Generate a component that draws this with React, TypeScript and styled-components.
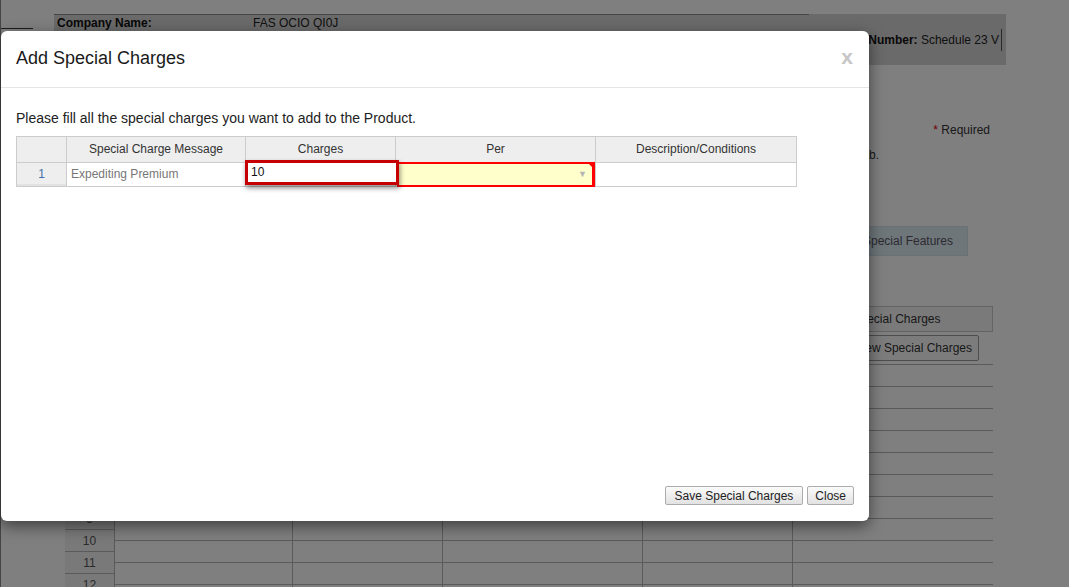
import React from "react";
import styled, { createGlobalStyle } from "styled-components";

const GlobalStyle = createGlobalStyle`
  * { box-sizing: border-box; }
  html, body { margin: 0; padding: 0; background: #fff; }
  body {
    font-family: "Liberation Sans", Arial, sans-serif;
    font-size: 12px;
    color: #333;
  }
`;

const Viewport = styled.div`
  position: relative;
  width: 1069px;
  height: 587px;
  overflow: hidden;
`;

/* ---------- background page ---------- */

const Page = styled.div`
  display: flex;
  height: 100%;
`;

const SideNav = styled.ul`
  flex: none;
  width: 33px;
  margin: 0;
  padding: 6px 0 0;
  list-style: none;
  border-left: 1px solid #8a8a8a;
`;

const NavItem = styled.li`
  height: 23px;
  border-bottom: 1px solid #3a3a3a;
`;

const Main = styled.div`
  flex: none;
  width: 952px;
  margin-left: 21px;
  padding-top: 14px;
  display: flex;
  flex-direction: column;
`;

const InfoBox = styled.div`
  flex: none;
  display: flex;
  height: 51px;
  background: #d4d4d4;
`;

const CompanyRow = styled.div`
  flex: none;
  width: 755px;
  height: 18px;
  display: flex;
  align-items: center;
  padding-left: 3px;
  border-top: 1px solid #8c8c8c;
  border-bottom: 1px solid #8c8c8c;
`;

const InfoLabel = styled.b`
  width: 196px;
  color: #111;
`;

const InfoValue = styled.span`
  color: #222;
`;

const NumberCell = styled.div`
  flex: 1;
  display: flex;
  align-items: center;
  justify-content: flex-end;
  padding-right: 4px;
  white-space: nowrap;
  overflow: hidden;
`;

const NumberText = styled.span`
  padding-right: 2px;
  border-right: 1px solid #555;
  line-height: 22px;
  color: #222;
  b { color: #111; }
`;

const Content = styled.div`
  display: flex;
  flex-direction: column;
  padding: 0 13px 0 11px;
`;

const RequiredLine = styled.div`
  margin-top: 56px;
  height: 18px;
  line-height: 18px;
  text-align: right;
  padding-right: 3px;
  color: #333;
  span { color: #d00; }
`;

const NoteLine = styled.div`
  margin-top: 7px;
  height: 18px;
  line-height: 18px;
  text-align: right;
  padding-right: 114px;
  color: #333;
  white-space: nowrap;
`;

const ButtonRow = styled.div<{ $gap: number; $right: number }>`
  display: flex;
  justify-content: flex-end;
  margin-top: ${(p) => p.$gap}px;
  padding-right: ${(p) => p.$right}px;
`;

const FeatureButton = styled.div`
  height: 30px;
  padding: 0 14px;
  display: flex;
  align-items: center;
  background: #dcedf5;
  border: 1px solid #cfe3ec;
  color: #5a5464;
  font-size: 12px;
`;

const TabBox = styled.div`
  align-self: flex-end;
  margin-top: 50px;
  width: 193px;
  height: 26px;
  line-height: 24px;
  text-align: center;
  background: #f4f4f4;
  border: 1px solid #c8c8c8;
  color: #333;
`;

const PlainButton = styled.div`
  height: 26px;
  padding: 0 6px;
  display: flex;
  align-items: center;
  background: #f8f8f8;
  border: 1px solid #9a9a9a;
  border-radius: 2px;
  color: #333;
`;

const BgTable = styled.div`
  display: flex;
  margin-top: 3px;
`;

const NumCol = styled.div`
  flex: none;
  width: 50px;
  padding-top: 12px;
  background: #f3f3f3;
  border-right: 1px solid #b5b5b5;
`;

const NumCell = styled.div`
  height: 22px;
  line-height: 23px;
  text-align: center;
  border-bottom: 1px solid #b5b5b5;
  color: #555;
`;

const DataRows = styled.div`
  flex: 1;
  border-top: 1px solid #b5b5b5;
`;

const DataRow = styled.div`
  display: grid;
  grid-template-columns: 178px 150px 200px 150px 200px;
  height: 22px;
  border-bottom: 1px solid #b5b5b5;
`;

const DataCell = styled.div`
  border-right: 1px solid #b5b5b5;
  &:last-child { border-right: none; }
`;

/* ---------- modal ---------- */

const Backdrop = styled.div`
  position: absolute;
  inset: 0;
  background: rgba(0, 0, 0, 0.5);
`;

const Dialog = styled.div`
  position: absolute;
  left: 1px;
  top: 31px;
  width: 868px;
  height: 490px;
  display: flex;
  flex-direction: column;
  background: #fff;
  border-radius: 6px;
  box-shadow: 0 5px 15px rgba(0, 0, 0, 0.5);
`;

const DialogHeader = styled.div`
  flex: none;
  height: 57px;
  display: flex;
  align-items: center;
  justify-content: space-between;
  padding: 0 16px 0 15px;
  border-bottom: 1px solid #e5e5e5;
`;

const Title = styled.h4`
  margin: -2px 0 0;
  font-size: 18px;
  font-weight: normal;
  color: #1a1a1a;
  line-height: 24px;
`;

const CloseX = styled.span`
  font-size: 21px;
  font-weight: bold;
  line-height: 1;
  color: #c6c6c6;
  margin-top: -6px;
`;

const DialogBody = styled.div`
  flex: 1;
  padding: 20px 15px 0;
`;

const Intro = styled.p`
  margin: 0 0 8px;
  font-size: 14px;
  line-height: 20px;
  color: #222;
`;

const Grid = styled.div`
  display: grid;
  grid-template-columns: 50px 179px 150px 200px 201px;
  width: 781px;
  border-left: 1px solid #ccc;
  border-top: 1px solid #ccc;
`;

const HeadCell = styled.div`
  height: 26px;
  line-height: 24px;
  text-align: center;
  background: #eee;
  color: #333;
  border-right: 1px solid #ccc;
  border-bottom: 1px solid #ccc;
`;

const RowNum = styled.div`
  height: 24px;
  line-height: 22px;
  text-align: center;
  background: #eee;
  color: #3f6fa9;
  border-right: 1px solid #ccc;
  border-bottom: 1px solid #ccc;
  box-shadow: inset 0 -2px 0 #e2e2e2;
`;

const Cell = styled.div<{ $muted?: boolean }>`
  position: relative;
  height: 24px;
  line-height: 22px;
  padding-left: 4px;
  color: ${(p) => (p.$muted ? "#777" : "#000")};
  border-right: 1px solid #ccc;
  border-bottom: 1px solid #ccc;
`;

const Editor = styled.div`
  position: absolute;
  left: -1px;
  top: -3px;
  width: 154px;
  height: 25px;
  padding-left: 3px;
  line-height: 19px;
  background: #fff;
  border: 3px solid #c60000;
  box-shadow: 1px 3px 5px rgba(0, 0, 0, 0.45);
  color: #111;
  z-index: 2;
`;

const SelectCell = styled.div`
  position: relative;
  height: 24px;
  display: flex;
  align-items: center;
  justify-content: flex-end;
  padding-right: 8px;
  background: #ffffcc;
  border-right: 1px solid #ccc;
  border-bottom: 1px solid #ccc;
  &::after {
    content: "";
    position: absolute;
    left: 1px;
    top: -1px;
    right: 0;
    bottom: -1px;
    border: 2px solid #f00;
    border-right-width: 3px;
  }
`;

const Corner = styled.span`
  position: absolute;
  top: 0;
  right: 0;
  width: 0;
  height: 0;
  border-top: 7px solid #f00;
  border-left: 7px solid transparent;
`;

const Arrow = styled.span`
  font-size: 9px;
  color: #b5b5b5;
  line-height: 1;
`;

const DialogFooter = styled.div`
  flex: none;
  display: flex;
  justify-content: flex-end;
  gap: 4px;
  padding: 0 15px 16px;
`;

const Btn = styled.button<{ $pad: number }>`
  height: 19px;
  padding: 0 ${(p) => p.$pad}px;
  font-family: "Liberation Sans", Arial, sans-serif;
  font-size: 12px;
  color: #222;
  background: linear-gradient(#fbfbfb, #e2e2e2);
  border: 1px solid #acacac;
  border-radius: 2px;
`;

const navItems = Array.from({ length: 17 });
const bgRows = Array.from({ length: 11 });
const numRows = Array.from({ length: 10 }, (_, i) => i + 3);

export default function App() {
  return (
    <Viewport>
      <GlobalStyle />
      <Page>
        <SideNav>
          {navItems.map((_, i) => (
            <NavItem key={i} />
          ))}
        </SideNav>
        <Main>
          <InfoBox>
            <CompanyRow>
              <InfoLabel>Company Name:</InfoLabel>
              <InfoValue>FAS OCIO QI0J</InfoValue>
            </CompanyRow>
            <NumberCell>
              <NumberText>
                <b>Contract Number:</b> Schedule 23 V
              </NumberText>
            </NumberCell>
          </InfoBox>
          <Content>
            <RequiredLine>
              <span>*</span> Required
            </RequiredLine>
            <NoteLine>Special charges can be managed from this tab.</NoteLine>
            <ButtonRow $gap={62} $right={25}>
              <FeatureButton>Special Features</FeatureButton>
            </ButtonRow>
            <TabBox>Special Charges</TabBox>
            <ButtonRow $gap={3} $right={14}>
              <PlainButton>View Special Charges</PlainButton>
            </ButtonRow>
            <BgTable>
              <NumCol>
                {numRows.map((n) => (
                  <NumCell key={n}>{n}</NumCell>
                ))}
              </NumCol>
              <DataRows>
                {bgRows.map((_, r) => (
                  <DataRow key={r}>
                    <DataCell />
                    <DataCell />
                    <DataCell />
                    <DataCell />
                    <DataCell />
                  </DataRow>
                ))}
              </DataRows>
            </BgTable>
          </Content>
        </Main>
      </Page>

      <Backdrop />

      <Dialog>
        <DialogHeader>
          <Title>Add Special Charges</Title>
          <CloseX>x</CloseX>
        </DialogHeader>
        <DialogBody>
          <Intro>Please fill all the special charges you want to add to the Product.</Intro>
          <Grid>
            <HeadCell />
            <HeadCell>Special Charge Message</HeadCell>
            <HeadCell>Charges</HeadCell>
            <HeadCell>Per</HeadCell>
            <HeadCell>Description/Conditions</HeadCell>
            <RowNum>1</RowNum>
            <Cell $muted>Expediting Premium</Cell>
            <Cell>
              <Editor>10</Editor>
            </Cell>
            <SelectCell>
              <Arrow>▼</Arrow>
              <Corner />
            </SelectCell>
            <Cell />
          </Grid>
        </DialogBody>
        <DialogFooter>
          <Btn $pad={9}>Save Special Charges</Btn>
          <Btn $pad={7}>Close</Btn>
        </DialogFooter>
      </Dialog>
    </Viewport>
  );
}
